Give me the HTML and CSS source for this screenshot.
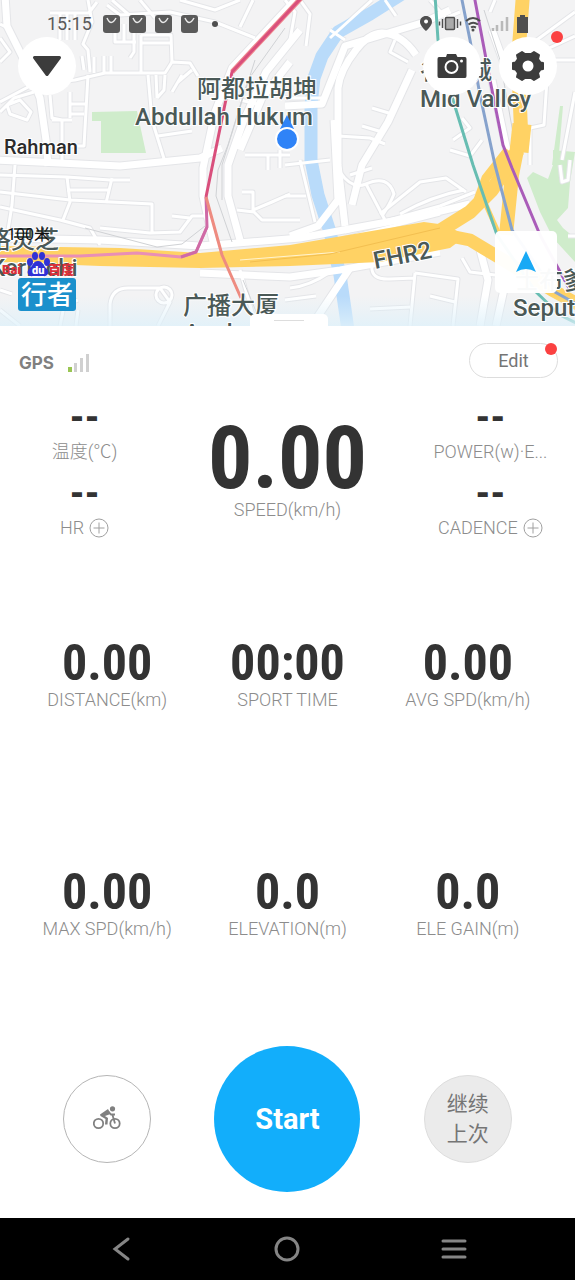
FILE: index.html
```html
<!DOCTYPE html>
<html lang="en">
<head>
  <meta charset="UTF-8" />
  <meta name="viewport" content="width=device-width, initial-scale=1.0"/>
  <title>Ride</title>
  <link rel="stylesheet" href="styles.css">
</head>
<body>
  <header class="map-area">
    <svg class="map" viewBox="0 0 575 326" preserveAspectRatio="xMidYMid slice" aria-label="Map">
      <defs>
        <g id="minor">
          <path d="M0 62 L10 52 L0 38 M0 24 L8 28 M7 105 L20 100 L31 112 L27 120 L10 114 Z M0 112 L14 98 L34 92"/>
          <path d="M0 102 L32 85 L75 80 L105 73 L165 73 L172 62 L190 63 L198 76"/>
          <path d="M88 0 L92 22 L83 44 L88 50 L90 72 M50 13 H88 M60 13 V40 M67 13 V40 M75 13 V40 M97 2 L88 14"/>
          <path d="M94 57 V73 M104 56 V73 M111 56 V73 M82 56 L84 70 M115 22 V42 H136 M124 24 V42 M134 24 V52 L130 58"/>
          <path d="M141 35 V73 M141 35 H171 L172 62 M141 43 H170 M107 5 L120 15 L170 12 L215 22 L255 38"/>
          <path d="M140 0 L155 18 M112 0 L128 14 M180 0 L215 10 L240 0 M253 0 L240 27 M148 75 L152 120 L165 162"/>
          <path d="M156 75 L157 98 M165 75 L164 90 L157 98 M182 75 L172 92 M192 70 L178 82 M158 136 L192 131"/>
          <path d="M50 95 L52 118 L62 120 V165 M70 92 V118 M70 104 H86 M70 114 H84 M52 120 H72 M88 75 L84 146 L70 146"/>
          <path d="M15 165 L12 205 L8 230 M0 175 L67 177 L110 180 H130 M67 177 L70 202 L63 220 M67 190 H108 M112 178 L106 203"/>
          <path d="M0 192 L70 200 L152 204 V232 M0 207 L60 220 L90 228 L100 245 M100 228 L150 233 L180 232 L192 216 H206 M172 216 L190 218"/>
          <path d="M110 326 V304 Q112 288 128 288 H160 L170 302 L158 326 M172 295 a8 8 0 1 0 -16 0 a8 8 0 1 0 16 0 M76 326 L78 310 M60 326 L64 306 L78 300"/>
          <path d="M242 192 H253 V210 L272 202 L290 194 M237 210 L254 212 L262 220 H300 M240 100 L262 105 M245 155 H290 M268 156 V170 M280 150 V168"/>
          <path d="M285 98 H322 M338 136 L370 138 L385 144 M285 165 L330 160 M395 40 L390 52 L408 62 M372 108 L392 114 M362 126 L382 132"/>
          <path d="M300 160 L315 222 M285 196 H306 M340 172 Q352 190 366 184 Q388 174 394 194 Q390 204 382 216 M366 184 L386 222 M350 175 L372 168"/>
          <path d="M380 214 L420 182 L446 178 L466 192 M400 214 Q432 196 464 190 M345 232 L440 206 L475 192 M330 242 L440 214"/>
          <path d="M372 265 Q370 280 390 279 L415 278 M415 273 L410 326 M415 273 L458 279 L453 326 M370 309 L410 307 M430 296 L455 302"/>
          <path d="M285 0 L295 12 L290 40 M300 0 L310 14 L306 46 M330 30 L345 40 M385 0 L396 16 M430 0 L446 18 L460 12 M372 0 L330 38"/>
          <path d="M495 0 L490 12 M575 12 L534 42 M575 36 L545 50 M525 60 H575 M548 64 L544 125 L530 128 V165 M575 92 L562 160"/>
          <path d="M453 140 L470 128 L462 118 M450 150 L470 156 L482 140 M560 165 L562 182 L568 180 L570 160 M568 236 H575 M462 258 L470 272 L495 275"/>
          <path d="M0 290 L12 294 M240 270 L256 326 M290 288 Q310 286 330 272 M285 300 L316 296 M0 310 L20 326"/>
        </g>
        <g id="major">
          <path d="M5 -5 L7 26 L28 68 L40 98 L46 140 L48 166"/>
          <path d="M-5 160 L60 163 L120 166 L200 158 L222 148 M300 -5 L232 68 L215 112 L203 168 V196 L214 246"/>
          <path d="M300 30 L266 72 L243 122 L228 165 V196 L240 240 M290 62 L262 98 L240 150"/>
          <path d="M285 106 L322 104 L345 46 L425 22 L450 10 M338 165 V88 Q340 70 356 50 Q368 34 382 33 Q402 34 416 55"/>
          <path d="M412 70 L388 122 L362 165 L352 205 M334 120 L338 200 L318 226 L290 236 M338 165 L345 226"/>
          <path d="M-5 238 L100 240 L200 246 L300 238 L420 216 L470 204 M200 273 L290 277 L340 270 L440 252"/>
          <path d="M480 326 L488 280 L480 250 M350 268 L314 322 M492 30 L505 66 M492 80 L510 165 M496 326 L506 280"/>
        </g>
        <linearGradient id="fade" x1="0" y1="0" x2="0" y2="1">
          <stop offset="0" stop-color="#dff1fa" stop-opacity="0"/>
          <stop offset="1" stop-color="#dff1fa" stop-opacity=".8"/>
        </linearGradient>
      </defs>

      <rect width="575" height="326" fill="#f3f3f4"/>
      <path fill="#cfeccb" d="M92 112 L137 111 L146 153 L101 153 V121 H92 Z M527 178 L533 172 L548 179 L553 165 L553 150 L575 152 L570 182 L568 208 L557 220 L563 228 L575 238 V262 L553 238 L540 212 Z M560 106 L563 106 L558 165 L552 165 Z"/>
      <use href="#minor" class="casing minor-casing"/>
      <use href="#major" class="casing major-casing"/>
      <path class="river" d="M405 -8 L370 14 L338 32 L322 56 L314 78 L311 105 L311 160 L318 195 L330 232 L340 275 L348 330"/>
      <use href="#minor" class="road minor-road"/>
      <use href="#major" class="road major-road"/>

      <!-- rail tracks -->
      <path class="rail" d="M285 28 L248 80 L228 145 L218 170 L216 196 L232 242 M255 60 L236 120 L222 165 L222 200 M85 228 L157 247 L182 244 L205 226 M484 10 L500 60 L516 150 M243 280 L262 326"/>

      <!-- highways -->
      <g class="highway">
        <path d="M523 -6 L518 60 L521 130 L512 175 L506 235" stroke-width="14"/>
        <path d="M522 124 L519 152" stroke-width="19"/>
        <path d="M518 150 L492 190 L470 212 L438 232" stroke-width="14"/>
        <path d="M508 150 L486 178 L478 200" stroke-width="9"/>
        <path d="M482 196 L498 232" stroke-width="5"/>
        <path d="M440 234 L470 240 L500 258 L552 290 L585 308" stroke-width="13"/>
      </g>
      <path fill="#ffd264" d="M0 246 L120 248 L200 253 L290 245 L424 222 L446 225 L466 236 L450 248 L380 262 L290 266 L200 268 L100 266 L0 262 Z"/>
      <path class="median" d="M240 260 L290 256 L340 252"/>
      <path class="median dark" d="M250 262 L330 254 L440 228"/>

      <!-- train lines -->
      <path class="line" stroke="#e98fb5" d="M0 256 H80 L137 253 L181 257 L196 252 L207 227"/>
      <path class="line" stroke="#cf6aa6" d="M181 257 L196 252 L207 227 L206 197"/>
      <path class="line wide" stroke="#ef8a8f" d="M304 -5 L260 42 L232 72"/>
      <path class="line" stroke="#d94f7c" d="M304 -5 L232 72 L225 104 L206 197"/>
      <path class="line" stroke="#ee8b80" d="M206 197 L222 255 L241 298"/>
      <path class="line" stroke="#67bdb2" d="M435 -5 L438 40 L453 100 L473 165 L497 235 L536 292 L560 315 L580 325"/>
      <path class="line" stroke="#86a2cc" d="M461 -5 L470 40 L480 95 L495 165 L512 230 L555 292 L580 306"/>
      <path class="line" stroke="#aa5cb9" d="M474 -5 L490 80 L503 145 L512 168 L540 235 L570 290"/>
      <rect y="296" width="575" height="30" fill="url(#fade)"/>

      <g class="place">
        <text x="197" y="97">阿都拉胡坤</text>
        <text x="135" y="125">Abdullah Hukum</text>
        <text x="420" y="79">谷中城</text>
        <text x="420" y="107">Mid Valley</text>
        <text x="-13" y="248">格灵芝</text>
        <text x="-10" y="276">Kerinchi</text>
        <text x="183" y="314">广播大厦</text>
        <text x="184" y="341">Angkasapuri</text>
        <text x="515" y="289">士布爹</text>
        <text x="513" y="316">Seputeh</text>
        <text x="375" y="269" transform="rotate(-11 375 269)">FHR2</text>
        <text class="area" x="4" y="154">Rahman</text>
      </g>

      <!-- current position -->
      <path fill="#2f83f7" d="M287 115 L294 129 H280 Z"/>
      <circle cx="287" cy="139" r="11" fill="#2f83f7" stroke="#fff" stroke-width="2"/>

      <!-- scale and map credits -->
      <text class="scale" x="7" y="240">100米</text>
      <g class="credit">
        <text x="2" y="274">Bai</text>
        <text x="48" y="274">百度</text>
        <g fill="#3031d5">
          <ellipse cx="30" cy="262" rx="3" ry="4"/>
          <ellipse cx="35" cy="256" rx="3" ry="4"/>
          <ellipse cx="42" cy="256" rx="3" ry="4"/>
          <ellipse cx="47" cy="262" rx="3" ry="4"/>
          <path d="M38 261 C43 261 43 266 47 269 C50 273 47 277 43 276 H33 C28 277 26 272 29 269 C33 266 33 261 38 261 Z"/>
        </g>
        <text class="du" x="32" y="274">du</text>
      </g>
      <rect x="18" y="278" width="58" height="33" rx="3" fill="#1b90cc"/>
      <text class="badge" x="21" y="304">行者</text>
    </svg>

    <div class="status-bar">
      <time>15:15</time>
      <svg class="bags" width="96" height="18" viewBox="0 0 96 18" aria-hidden="true">
        <g fill="#5a5a5a">
          <rect width="17" height="18" rx="3"/>
          <rect x="26" width="17" height="18" rx="3"/>
          <rect x="52" width="17" height="18" rx="3"/>
          <rect x="78" width="17" height="18" rx="3"/>
        </g>
        <path d="M4 3 Q8 12 13 3 M30 3 Q34 12 39 3 M56 3 Q60 12 65 3 M82 3 Q86 12 91 3" fill="none" stroke="#e8e8e8" stroke-width="1.5"/>
      </svg>
      <span class="more-dot"></span>
      <svg class="status-icons" width="110" height="20" viewBox="0 0 110 20" aria-hidden="true">
        <path fill="#4f4f4f" fill-rule="evenodd" d="M6 2 C9.500 2 12 4.500 12 8 C12 12 6 17 6 17 C6 17 0 12 0 8 C0 4.500 2.500 2 6 2 Z M6 5.500 a2 2 0 1 0 .1 0 Z"/>
        <rect x="25.500" y="3.500" width="9" height="12" rx="1" fill="#aaa" stroke="#4f4f4f" stroke-width="1.500"/>
        <path d="M22.500 5 V14 M37.500 5 V14 M19.500 7.500 V11.500 M40.500 7.500 V11.500" stroke="#4f4f4f" stroke-width="1.500"/>
        <path d="M46 7 Q53 1 60 7 M48.500 10.500 Q53 7 58 10.500 M51 13.500 Q53 12 56 13.500" fill="none" stroke="#4f4f4f" stroke-width="2"/>
        <circle cx="53" cy="16" r="1.500" fill="#4f4f4f"/>
        <path d="M73 14 V17 M77 11 V17 M82 7 V17 M87 3 V17" stroke="#b9b9b9" stroke-width="2.500"/>
        <path fill="#4f4f4f" d="M100 1 H105 V3 H108 V19 H97 V3 H100 Z"/>
      </svg>
    </div>

    <div class="map-buttons">
      <button class="round" aria-label="Collapse">
        <svg width="30" height="22" viewBox="0 0 30 22"><path d="M2.500 2.500 H27.500 L15 19.500 Z" fill="#3c3c3c" stroke="#3c3c3c" stroke-width="3" stroke-linejoin="round"/></svg>
      </button>
      <button class="round camera" aria-label="Camera">
        <svg width="30" height="26" viewBox="0 0 30 26">
          <path fill="#3c3c3c" d="M9 4 L10 1 H19 L20.500 4 H28 Q29.500 4 29.500 6 V23 Q29.500 25 28 25 H2 Q.5 25 .5 23 V6 Q.5 4 2 4 Z"/>
          <circle cx="14.500" cy="14" r="6" fill="#3c3c3c" stroke="#fff" stroke-width="2"/>
          <circle cx="24.500" cy="8" r="1.500" fill="#fff"/>
        </svg>
      </button>
      <button class="round" aria-label="Settings">
        <svg width="34" height="32" viewBox="0 0 34 32">
          <path fill="#3c3c3c" stroke="#3c3c3c" stroke-width="2" stroke-linejoin="round" d="M11 2 L14 4 H20 L23 2 L28 5 L27 9 L29.500 12.500 L32 13 V19 L29.500 19.500 L27 23 L28 27 L23 30 L20 28 H14 L11 30 L6 27 L7 23 L4.500 19.500 L2 19 V13 L4.500 12.500 L7 9 L6 5 Z"/>
          <circle cx="17" cy="16" r="5.500" fill="#fff"/>
        </svg>
        <span class="notice"></span>
      </button>
    </div>

    <button class="locate" aria-label="Locate">
      <svg width="20" height="22" viewBox="0 0 20 22"><path fill="#19a9f5" d="M10 0 L20 21 Q10 15 0 21 Z"/></svg>
    </button>
    <div class="handle"></div>
  </header>

  <main class="panel">
    <div class="panel-top">
      <div class="gps">
        <span>GPS</span>
        <svg width="22" height="18" viewBox="0 0 22 18" aria-hidden="true">
          <rect y="13" width="4" height="5" fill="#9ac653"/>
          <rect x="6" y="9" width="3" height="9" fill="#d0d0d0"/>
          <rect x="12" y="4" width="3" height="14" fill="#d0d0d0"/>
          <rect x="18" width="3" height="18" fill="#d0d0d0"/>
        </svg>
      </div>
      <button class="edit">Edit<span class="notice"></span></button>
    </div>

    <section class="live">
      <div class="sensors">
        <div class="sensor"><span class="dash">--</span><span class="label">温度(℃)</span></div>
        <div class="sensor">
          <span class="dash">--</span>
          <span class="label">HR <svg class="plus" viewBox="0 0 20 20"><circle cx="10" cy="10" r="9"/><path d="M10 4.500 V15.500 M4.500 10 H15.500"/></svg></span>
        </div>
      </div>
      <div class="speed"><span class="value">0.00</span><span class="label">SPEED(km/h)</span></div>
      <div class="sensors">
        <div class="sensor"><span class="dash">--</span><span class="label">POWER(w)·E...</span></div>
        <div class="sensor">
          <span class="dash">--</span>
          <span class="label">CADENCE <svg class="plus" viewBox="0 0 20 20"><circle cx="10" cy="10" r="9"/><path d="M10 4.500 V15.500 M4.500 10 H15.500"/></svg></span>
        </div>
      </div>
    </section>

    <section class="stats">
      <div class="stat"><span class="value">0.00</span><span class="label">DISTANCE(km)</span></div>
      <div class="stat"><span class="value">00:00</span><span class="label">SPORT TIME</span></div>
      <div class="stat"><span class="value">0.00</span><span class="label">AVG SPD(km/h)</span></div>
      <div class="stat"><span class="value">0.00</span><span class="label">MAX SPD(km/h)</span></div>
      <div class="stat"><span class="value">0.0</span><span class="label">ELEVATION(m)</span></div>
      <div class="stat"><span class="value">0.0</span><span class="label">ELE GAIN(m)</span></div>
    </section>

    <section class="actions">
      <button class="sport" aria-label="Cycling">
        <svg width="28" height="24" viewBox="0 0 28 24" fill="none" stroke="#808080">
          <circle cx="5.500" cy="17.500" r="4.700" stroke-width="1.800"/>
          <circle cx="22" cy="17.500" r="4.700" stroke-width="1.800"/>
          <circle cx="19.500" cy="2.800" r="2.600" fill="#808080" stroke="none"/>
          <path d="M7 8.500 L15 3 L17.500 8 L12 10 L15 12 L14.500 18.500 H12 L12.500 13 L7.500 10 Z" fill="#808080" stroke="none"/>
          <path d="M15 5 L18 8.500 H22 M19.500 9 L22 17.500" stroke-width="1.800"/>
        </svg>
      </button>
      <button class="start">Start</button>
      <button class="resume">继续<br>上次</button>
    </section>
  </main>

  <nav class="nav-bar">
    <button aria-label="Back"><svg width="26" height="26" viewBox="0 0 26 26"><path d="M20 3 L7 13 L20 23"/></svg></button>
    <button aria-label="Home"><svg width="26" height="26" viewBox="0 0 26 26"><circle cx="13" cy="13" r="11"/></svg></button>
    <button aria-label="Recent apps"><svg width="26" height="26" viewBox="0 0 26 26"><path d="M2 5 H24 M2 13 H24 M2 21 H24"/></svg></button>
  </nav>
</body>
</html>
```
FILE: styles.css
```css
* {
  box-sizing: border-box;
}

body {
  margin: 0;
  min-height: 100vh;
  display: flex;
  flex-direction: column;
  background: #fff;
  color: #333;
  font-family: Roboto, "Noto Sans CJK SC", sans-serif;
}

button {
  padding: 0;
  border: none;
  font-family: inherit;
  cursor: pointer;
}

/* map */
.map-area {
  position: relative;
  height: 326px;
  overflow: hidden;
}

.map {
  position: absolute;
  width: 100%;
  height: 100%;
}

.casing,
.road,
.river,
.rail,
.highway,
.median,
.line {
  fill: none;
  stroke-linejoin: round;
}

.casing {
  stroke: #e4e5e8;
}

.road {
  stroke: #fff;
}

.minor-casing {
  stroke-width: 5px;
}

.minor-road {
  stroke-width: 3px;
}

.major-casing {
  stroke-width: 9px;
}

.major-road {
  stroke-width: 7px;
}

.river {
  stroke: #b9dbfa;
  stroke-width: 13px;
}

.rail {
  stroke: #d0d2d5;
}

.highway {
  stroke: #ffd264;
}

.median {
  stroke: #fff3d0;
  stroke-width: 1px;
}

.median.dark {
  stroke: #f3bf50;
}

.line {
  stroke-width: 3px;
}

.line.wide {
  stroke-width: 5px;
}

.place {
  font-size: 24px;
  font-weight: 500;
  fill: #4a5957;
  stroke: #fff;
  stroke-width: 2px;
  paint-order: stroke;
}

.place .area {
  font-size: 20px;
  fill: #2b2b2b;
}

.scale {
  font-size: 16px;
  fill: #111;
}

.credit {
  font-size: 13px;
  font-weight: 900;
  fill: #dc3038;
}

.credit .du {
  font-size: 11px;
  fill: #fff;
}

.badge {
  font-size: 26px;
  font-weight: 500;
  fill: #fff;
}

.status-bar {
  position: relative;
  display: flex;
  align-items: center;
  height: 37px;
  padding: 10px 45px 0 47px;
  color: #5a5a5a;
}

.status-bar time {
  font-size: 18px;
}

.bags {
  margin-left: 11px;
}

.more-dot {
  width: 6px;
  height: 6px;
  margin-left: 13px;
  border-radius: 50%;
  background: #4f4f4f;
}

.status-icons {
  margin-left: auto;
}

.map-buttons {
  position: relative;
  display: flex;
  gap: 18px;
  padding: 0 18px;
}

.round {
  position: relative;
  display: flex;
  align-items: center;
  justify-content: center;
  width: 58px;
  height: 58px;
  border-radius: 50%;
  background: #fff;
}

.camera {
  margin-left: auto;
}

.notice {
  position: absolute;
  top: -1px;
  right: 0;
  width: 12px;
  height: 12px;
  border-radius: 50%;
  background: #fb4141;
}

.round .notice {
  top: -6px;
  right: -6px;
}

.locate {
  position: absolute;
  right: 18px;
  bottom: 33px;
  display: flex;
  align-items: center;
  justify-content: center;
  width: 62px;
  height: 62px;
  border-radius: 5px;
  background: rgba(255, 255, 255, 0.97);
}

.handle {
  position: absolute;
  left: 50%;
  bottom: 0;
  width: 78px;
  height: 12px;
  margin-left: -38px;
  border-radius: 5px 5px 0 0;
  background: #fff;
}

.handle::after {
  content: "";
  display: block;
  width: 30px;
  height: 6px;
  margin: 6px auto 0;
  border-top: 1px solid #ddd;
  border-bottom: 1px solid #ddd;
}

/* data panel */
.panel {
  flex: 1;
  display: flex;
  flex-direction: column;
  padding: 17px 17px 26px;
}

.panel-top {
  display: flex;
  align-items: center;
  justify-content: space-between;
}

.gps {
  display: flex;
  align-items: center;
  gap: 14px;
  padding: 4px 0 0 2px;
  color: #808080;
  font-family: Inter, sans-serif;
  font-size: 17px;
  font-weight: 700;
}

.edit {
  position: relative;
  width: 89px;
  height: 35px;
  border: 1px solid #ddd;
  border-radius: 18px;
  background: #fff;
  color: #757575;
  font-size: 18px;
}

.live {
  display: grid;
  grid-template-columns: 1fr 2fr 1fr;
  height: 172px;
  padding-top: 24px;
}

.sensor,
.speed,
.stat {
  display: flex;
  flex-direction: column;
  align-items: center;
}

.sensor {
  height: 76px;
}

.label {
  display: flex;
  align-items: center;
  gap: 5px;
  color: #8c8c8c;
  font-size: 18px;
  font-weight: 300;
  line-height: 24px;
  white-space: nowrap;
}

.plus {
  width: 20px;
  height: 20px;
  fill: none;
  stroke: #a0a0a0;
}

.value,
.dash {
  font-family: "Roboto Condensed", Roboto, sans-serif;
  font-weight: 700;
}

.dash {
  margin-bottom: 6px;
  font-size: 42px;
  line-height: 32px;
}

.speed .value {
  margin-top: 16px;
  font-size: 88px;
  line-height: 80px;
}

.stats {
  flex: 1;
  display: grid;
  grid-template-columns: repeat(3, 1fr);
  grid-template-rows: 5fr 4fr;
  padding-top: 84px;
}

.stat .value {
  margin-top: 4px;
  font-size: 50px;
  line-height: 50px;
}

.actions {
  display: grid;
  grid-template-columns: repeat(3, 1fr);
  align-items: center;
  justify-items: center;
}

.sport,
.resume {
  width: 88px;
  height: 88px;
  border: 1px solid #b5b5b5;
  border-radius: 50%;
  background: #fff;
}

.resume {
  border-color: #ddd;
  background: #ebebeb;
  color: #757575;
  font-size: 21px;
  line-height: 30px;
}

.start {
  width: 146px;
  height: 146px;
  border-radius: 50%;
  background: #12aefb;
  color: #fff;
  font-size: 29px;
  font-weight: 700;
}

/* system navigation */
.nav-bar {
  display: flex;
  align-items: center;
  justify-content: space-around;
  height: 62px;
  padding: 0 38px;
  background: #000;
}

.nav-bar button {
  display: flex;
  background: none;
}

.nav-bar svg {
  fill: none;
  stroke: #858585;
  stroke-width: 3px;
  stroke-linecap: round;
}
```
